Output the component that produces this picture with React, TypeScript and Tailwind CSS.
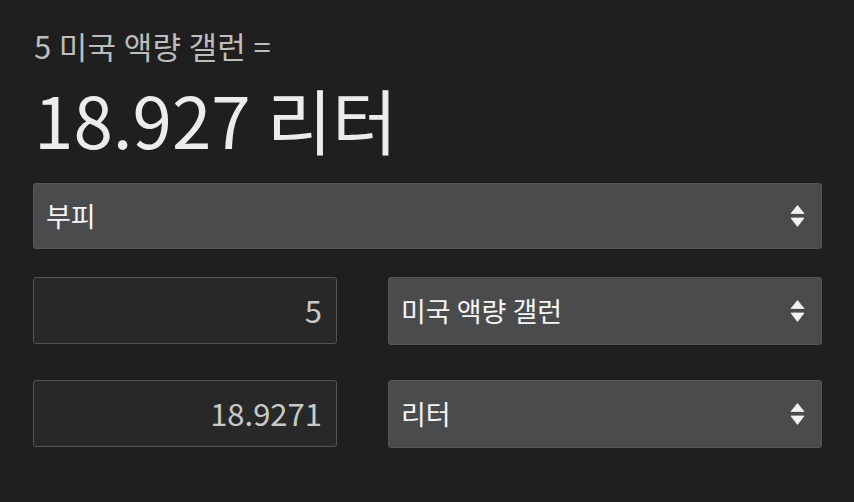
import { ReactNode } from 'react';

const font = { fontFamily: '"Noto Sans CJK KR", "Noto Sans", sans-serif' };

const SortArrows = () => (
  <svg width="15" height="24" viewBox="0 0 15 24" className="shrink-0">
    <path d="M7.5 1.5 L14 9.5 L1 9.5 Z" fill="#f2f2f2" strokeLinejoin="round" stroke="#f2f2f2" strokeWidth="0.8" />
    <path d="M1 14 L14 14 L7.5 22.5 Z" fill="#f2f2f2" strokeLinejoin="round" stroke="#f2f2f2" strokeWidth="0.8" />
  </svg>
);

const SelectBox = ({ children, className }: { children: ReactNode; className?: string }) => (
  <div
    className={`flex items-center justify-between bg-[#4a4b4d] border border-[#555658] rounded-[3px] pl-[12px] pr-[16px] text-[27px] text-[#f4f4f4] ${className ?? ''}`}
  >
    <span>{children}</span>
    <SortArrows />
  </div>
);

const NumberBox = ({ value }: { value: string }) => (
  <div className="flex items-center justify-end w-[304px] h-[67px] bg-[#282828] border border-[#535353] rounded-[3px] pr-[14px] text-[31px] text-[#c8c8c8]">
    {value}
  </div>
);

export default function App() {
  return (
    <div style={font} className="w-[854px] h-[502px] bg-[#1f1f1f] pl-[33px] pr-[32px] pt-[26px]">
      <div className="text-[31px] leading-[40px] tracking-[0.3px] text-[#bdbdbd] pl-[1px]">5 미국 액량 갤런 =</div>
      <div className="text-[71px] leading-[96px] mt-[4px] text-[#ececec] pl-[1px]">18.927 리터</div>
      <SelectBox className="h-[66px] mt-[17px]">부피</SelectBox>
      <div className="flex flex-col gap-[35px] mt-[28px]">
        <div className="flex gap-[51px]">
          <NumberBox value="5" />
          <SelectBox className="flex-1 h-[68px]">미국 액량 갤런</SelectBox>
        </div>
        <div className="flex gap-[51px]">
          <NumberBox value="18.9271" />
          <SelectBox className="flex-1 h-[68px]">리터</SelectBox>
        </div>
      </div>
    </div>
  );
}
